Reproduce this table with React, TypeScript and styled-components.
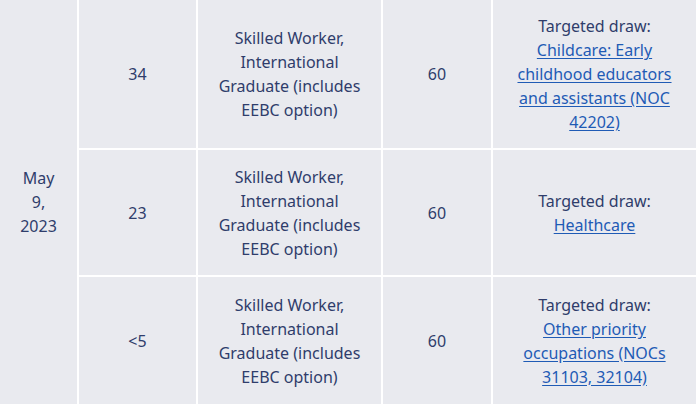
import { Fragment } from "react";
import styled, { createGlobalStyle } from "styled-components";

const Global = createGlobalStyle`
    html, body {
        margin: 0;
        padding: 0;
        background: #ffffff;
    }
    body {
        font-family: "Noto Sans", "Open Sans", sans-serif;
        font-size: 16px;
        color: #2f3d6b;
    }
`;

const Table = styled.div`
    display: grid;
    grid-template-columns: 77px 117px 183px 108px 203px;
    grid-template-rows: 148px 125px 127px;
    gap: 2px;
    width: 699px;
    background: #ffffff;
`;

const Cell = styled.div<{ $pad?: number }>`
    display: flex;
    align-items: center;
    justify-content: center;
    text-align: center;
    line-height: 24px;
    padding: 0 ${(p) => p.$pad ?? 16}px;
    background: #e9eaef;
`;

const DateCell = styled(Cell)`
    grid-column: 1;
    grid-row: 1 / span 3;
`;

const Link = styled.a`
    color: #1f5bb5;
    text-decoration: underline;
    text-underline-offset: 2px;
`;

type Draw = {
    invited: string;
    link: string;
};

const draws: Draw[] = [
    { invited: "34", link: "Childcare: Early childhood educators and assistants (NOC 42202)" },
    { invited: "23", link: "Healthcare" },
    { invited: "<5", link: "Other priority occupations (NOCs 31103, 32104)" },
];

export default function App() {
    return (
        <>
            <Global />
            <Table>
                <DateCell>May 9, 2023</DateCell>
                {draws.map((d) => (
                    <Fragment key={d.invited}>
                        <Cell>{d.invited}</Cell>
                        <Cell>Skilled Worker, International Graduate (includes EEBC option)</Cell>
                        <Cell>60</Cell>
                        <Cell>
                            <div>
                                Targeted draw:
                                <br />
                                <Link href="#">{d.link}</Link>
                            </div>
                        </Cell>
                    </Fragment>
                ))}
            </Table>
        </>
    );
}
